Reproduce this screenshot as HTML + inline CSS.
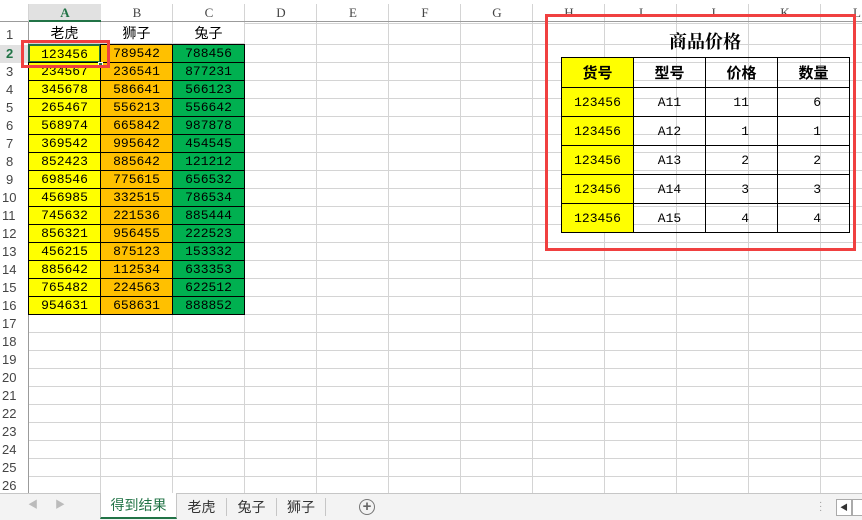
<!DOCTYPE html>
<html><head><meta charset="utf-8"><style>
*{margin:0;padding:0;box-sizing:border-box}
body{width:862px;height:520px;overflow:hidden;background:#fff;position:relative;font-family:"Liberation Serif","Noto Serif CJK SC",serif}
.a{position:absolute}
#top{left:0;top:0;width:862px;height:4px;background:#fff}
#colh{left:0;top:4px;width:862px;height:18px;background:#fff;border-bottom:1px solid #9b9b9b;
 background-image:repeating-linear-gradient(to right,transparent 0 71px,#d4d4d4 71px 72px);background-position:29px 0}
#colh span{position:absolute;top:1px;width:72px;text-align:center;font-size:13px;color:#444}
#rowh{left:0;top:22px;width:29px;height:471px;border-right:1px solid #9b9b9b;background:#fff}
#rowh div{position:absolute;left:0;width:28px;height:18px;line-height:18px;padding-left:6px;font-family:"Liberation Sans",sans-serif;font-size:13px;color:#444}
#grid{left:29px;top:22px;width:833px;height:471px;
 background-image:repeating-linear-gradient(to right,transparent 0 71px,#d4d4d4 71px 72px),repeating-linear-gradient(to bottom,transparent 0 17px,#d4d4d4 17px 18px);
 background-position:0 0,0 5px}
.h1{top:22px;height:22px;font-family:"Liberation Sans","Noto Sans CJK SC",sans-serif;font-size:14px;text-align:center;line-height:22px;width:72px;background:#fff;border-bottom:1px solid #d4d4d4;border-right:1px solid #d4d4d4}
.col{top:45px;width:73px}
.col div{height:19px;border:1px solid #000;margin-top:-1px;text-align:center;font-family:"Liberation Mono",monospace;font-size:13px;line-height:17px}
#tabs{left:0;top:493px;width:862px;height:27px;background:#f3f3f3;border-top:1px solid #c6c6c6;font-family:"Liberation Sans","Noto Sans CJK SC",sans-serif;font-size:14px}
.tab{position:absolute;top:0;height:24px;line-height:24px;text-align:center;color:#333}
table{position:absolute;left:561px;top:57px;border-collapse:collapse}
td{border:1px solid #000;width:72px;height:29px;font-family:"Liberation Mono",monospace;font-size:13px;text-align:center}
th{border:1px solid #000;width:72px;height:30px;font-size:15px;font-family:"Liberation Sans","Noto Sans CJK SC",sans-serif;font-weight:bold}
.y{background:#ff0}
.r{text-align:right;padding-right:28px}
</style></head><body>
<div class="a" id="top"></div>
<div class="a" id="grid"></div>
<div class="a" id="colh">
<span style="left:29px;color:#217346;font-weight:bold;background:#e1e1e1;border-bottom:2px solid #217346;height:18px;top:0;padding-top:1px">A</span>
<span style="left:101px">B</span><span style="left:173px">C</span><span style="left:245px">D</span><span style="left:317px">E</span><span style="left:389px">F</span><span style="left:461px">G</span><span style="left:533px">H</span><span style="left:605px">I</span><span style="left:677px">J</span><span style="left:749px">K</span><span style="left:821px">L</span>
</div>
<div class="a" style="left:0;top:4px;width:29px;height:18px;background:#fff;border-right:1px solid #d4d4d4;border-bottom:1px solid #9b9b9b"></div>
<div class="a" id="rowh">
<div style="top:4px">1</div><div style="top:23px;color:#217346;font-weight:bold;background:#e1e1e1">2</div><div style="top:41px">3</div><div style="top:59px">4</div><div style="top:77px">5</div><div style="top:95px">6</div><div style="top:113px">7</div><div style="top:131px">8</div><div style="top:149px">9</div><div style="top:167px;padding-left:2px">10</div><div style="top:185px;padding-left:2px">11</div><div style="top:203px;padding-left:2px">12</div><div style="top:221px;padding-left:2px">13</div><div style="top:239px;padding-left:2px">14</div><div style="top:257px;padding-left:2px">15</div><div style="top:275px;padding-left:2px">16</div><div style="top:293px;padding-left:2px">17</div><div style="top:311px;padding-left:2px">18</div><div style="top:329px;padding-left:2px">19</div><div style="top:347px;padding-left:2px">20</div><div style="top:365px;padding-left:2px">21</div><div style="top:383px;padding-left:2px">22</div><div style="top:401px;padding-left:2px">23</div><div style="top:419px;padding-left:2px">24</div><div style="top:437px;padding-left:2px">25</div><div style="top:455px;padding-left:2px">26</div>
</div>
<div class="a h1" style="left:29px">老虎</div><div class="a h1" style="left:101px">狮子</div><div class="a h1" style="left:173px">兔子</div>
<div class="a col" style="left:28px"><div class="y" style="border:2px solid #217346">123456</div><div class="y">234567</div><div class="y">345678</div><div class="y">265467</div><div class="y">568974</div><div class="y">369542</div><div class="y">852423</div><div class="y">698546</div><div class="y">456985</div><div class="y">745632</div><div class="y">856321</div><div class="y">456215</div><div class="y">885642</div><div class="y">765482</div><div class="y">954631</div></div>
<div class="a col" style="left:100px"><div style="background:#ffc000">789542</div><div style="background:#ffc000">236541</div><div style="background:#ffc000">586641</div><div style="background:#ffc000">556213</div><div style="background:#ffc000">665842</div><div style="background:#ffc000">995642</div><div style="background:#ffc000">885642</div><div style="background:#ffc000">775615</div><div style="background:#ffc000">332515</div><div style="background:#ffc000">221536</div><div style="background:#ffc000">956455</div><div style="background:#ffc000">875123</div><div style="background:#ffc000">112534</div><div style="background:#ffc000">224563</div><div style="background:#ffc000">658631</div></div>
<div class="a col" style="left:172px"><div style="background:#00b050">788456</div><div style="background:#00b050">877231</div><div style="background:#00b050">566123</div><div style="background:#00b050">556642</div><div style="background:#00b050">987878</div><div style="background:#00b050">454545</div><div style="background:#00b050">121212</div><div style="background:#00b050">656532</div><div style="background:#00b050">786534</div><div style="background:#00b050">885444</div><div style="background:#00b050">222523</div><div style="background:#00b050">153332</div><div style="background:#00b050">633353</div><div style="background:#00b050">622512</div><div style="background:#00b050">888852</div></div>
<div class="a" style="left:98px;top:62px;width:5px;height:5px;background:#217346;border:1px solid #fff"></div>
<div class="a" style="left:21px;top:40px;width:89px;height:28px;border:3px solid #f04040"></div>
<div class="a" style="left:561px;top:28px;width:288px;text-align:center;font-size:18px;font-weight:bold;font-family:'Liberation Serif','Noto Serif CJK SC',serif">商品价格</div>
<table>
<tr><th class="y">货号</th><th>型号</th><th>价格</th><th>数量</th></tr>
<tr><td class="y">123456</td><td>A11</td><td class="r">11</td><td class="r">6</td></tr>
<tr><td class="y">123456</td><td>A12</td><td class="r">1</td><td class="r">1</td></tr>
<tr><td class="y">123456</td><td>A13</td><td class="r">2</td><td class="r">2</td></tr>
<tr><td class="y">123456</td><td>A14</td><td class="r">3</td><td class="r">3</td></tr>
<tr><td class="y">123456</td><td>A15</td><td class="r">4</td><td class="r">4</td></tr>
</table>
<div class="a" style="left:545px;top:14px;width:311px;height:237px;border:3px solid #f04040"></div>
<div class="a" id="tabs">
<div class="tab" style="left:28px;color:#bbb;font-size:10px">◀</div><div class="tab" style="left:55px;color:#bbb;font-size:10px">▶</div>
<div class="tab" style="left:100px;width:77px;background:#fff;color:#217346;border-bottom:2px solid #217346;height:26px;top:-1px;border-left:1px solid #c6c6c6;border-right:1px solid #c6c6c6">得到结果</div>
<div class="tab" style="left:177px;width:50px;border-right:1px solid #c6c6c6;height:18px;top:4px;line-height:18px">老虎</div>
<div class="tab" style="left:227px;width:50px;border-right:1px solid #c6c6c6;height:18px;top:4px;line-height:18px">兔子</div>
<div class="tab" style="left:277px;width:49px;border-right:1px solid #c6c6c6;height:18px;top:4px;line-height:18px">狮子</div>
<div class="a" style="left:359px;top:5px;width:16px;height:16px;border:1.5px solid #777;border-radius:50%;text-align:center;line-height:13px;font-size:15px;color:#666;font-weight:bold">+</div>
<div class="a" style="left:819px;top:7px;color:#999;font-size:10px;line-height:4px">·<br>·<br>·</div>
<div class="a" style="left:836px;top:5px;width:16px;height:17px;border:1px solid #aaa;background:#fff;font-size:8px;text-align:center;line-height:15px;color:#333">◀</div>
<div class="a" style="left:852px;top:5px;width:12px;height:17px;border:1px solid #aaa;background:#fff"></div>
</div>
</body></html>
